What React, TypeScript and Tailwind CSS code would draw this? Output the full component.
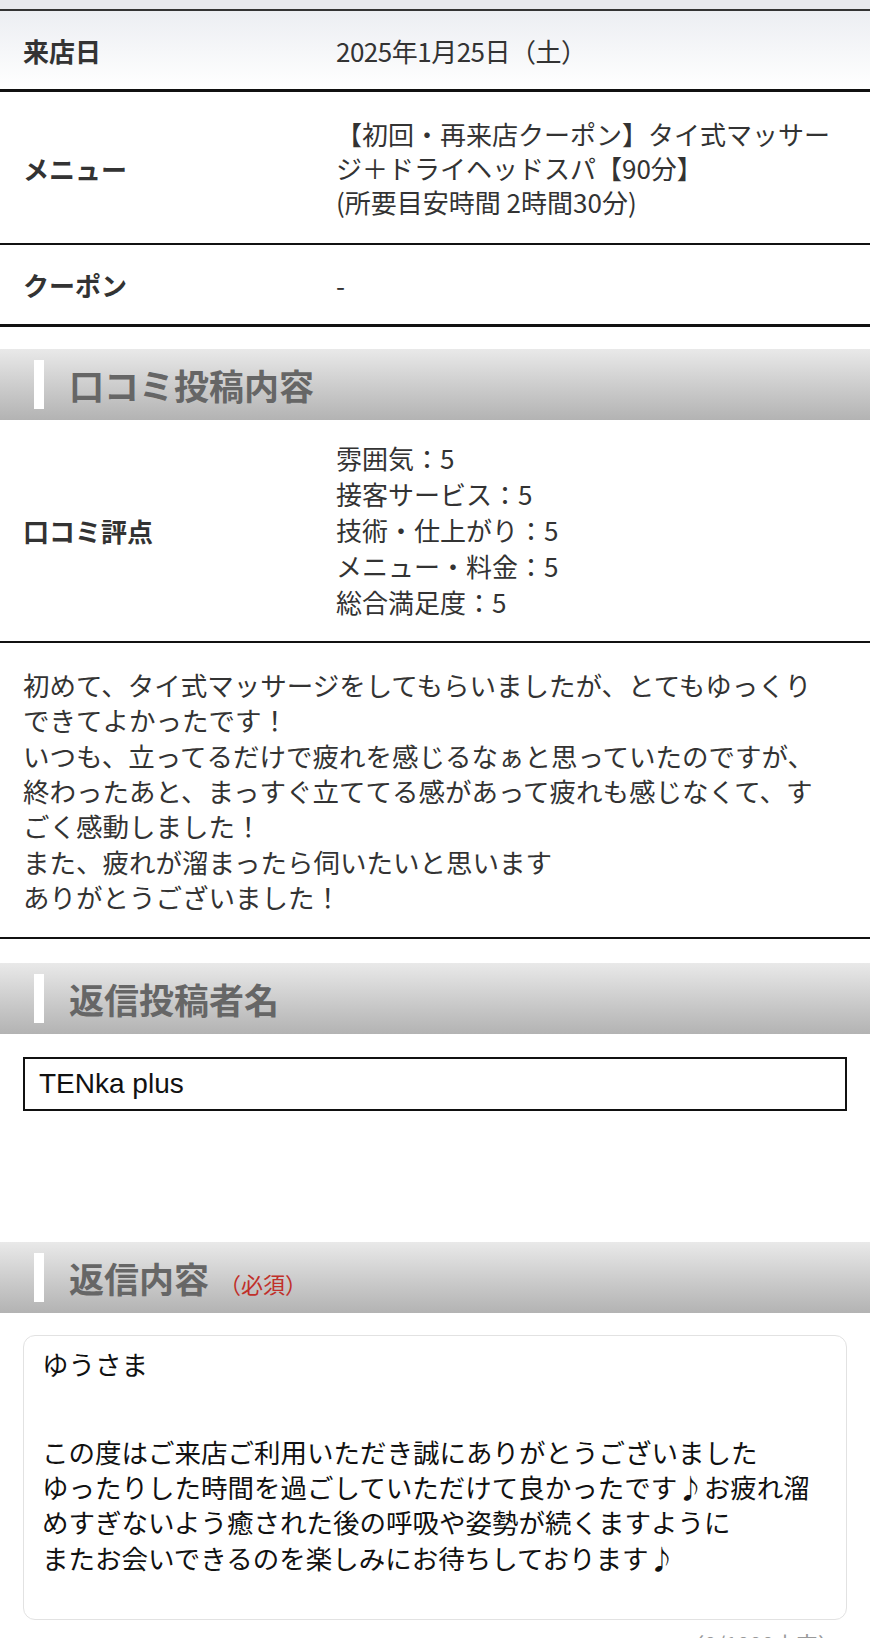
import React from 'react';

const jp = { fontFamily: '"Noto Sans CJK JP", "Noto Sans", sans-serif' };

const SectionHeader: React.FC<{ title: string; required?: boolean }> = ({ title, required }) => (
  <div className="h-[71px] flex items-center bg-gradient-to-b from-[#e9e9e9] to-[#b3b3b3]">
    <div className="ml-[34px] w-[10px] h-[49px] bg-white" />
    <div className="ml-[25px] flex items-baseline">
      <span className="text-[35px] font-bold text-[#666666] leading-none">{title}</span>
      {required && <span className="ml-[10px] text-[22px] text-[#c0302a] leading-none">（必須）</span>}
    </div>
  </div>
);

const Row: React.FC<{ label: string; className?: string; children: React.ReactNode }> = ({ label, className = '', children }) => (
  <div className={`grid grid-cols-[313px_1fr] items-center pl-[23px] border-[#111111] ${className}`}>
    <div className="text-[26px] font-bold text-[#333333]">{label}</div>
    <div className="text-[26px] text-[#333333]">{children}</div>
  </div>
);

const review = [
  '初めて、タイ式マッサージをしてもらいましたが、とてもゆっくり',
  'できてよかったです！',
  'いつも、立ってるだけで疲れを感じるなぁと思っていたのですが、',
  '終わったあと、まっすぐ立ててる感があって疲れも感じなくて、す',
  'ごく感動しました！',
  'また、疲れが溜まったら伺いたいと思います',
  'ありがとうございました！',
];

const reply = [
  'この度はご来店ご利用いただき誠にありがとうございました',
  'ゆったりした時間を過ごしていただけて良かったです♪お疲れ溜',
  'めすぎないよう癒された後の呼吸や姿勢が続くますように',
  'またお会いできるのを楽しみにお待ちしております♪',
];

export default function App() {
  return (
    <div className="w-[870px] h-[1638px] overflow-hidden bg-white" style={jp}>
      <div className="h-[9px] bg-[#e8e9ed]" />

      <Row label="来店日" className="h-[83px] border-t-2 border-b-[3px] border-t-[#333333] bg-gradient-to-b from-[#eceef2] to-white">
        <span className="tracking-[-0.5px]">2025年1月25日（土）</span>
      </Row>

      <Row label="メニュー" className="pt-[25px] pb-[24px] border-b-2">
        <div className="leading-[34px] whitespace-nowrap">
          <div>【初回・再来店クーポン】タイ式マッサー</div>
          <div>ジ＋ドライヘッドスパ【90分】</div>
          <div>(所要目安時間 2時間30分)</div>
        </div>
      </Row>

      <Row label="クーポン" className="h-[82px] border-b-[3px]">
        <span>-</span>
      </Row>

      <div className="mt-[22px]">
        <SectionHeader title="口コミ投稿内容" />
      </div>

      <Row label="口コミ評点" className="pt-[20px] pb-[21px] border-b-2">
        <div className="leading-[36px] whitespace-nowrap">
          <div>雰囲気：5</div>
          <div>接客サービス：5</div>
          <div>技術・仕上がり：5</div>
          <div>メニュー・料金：5</div>
          <div>総合満足度：5</div>
        </div>
      </Row>

      <div className="pl-[23px] pt-[24px] pb-[23px] border-b-2 border-[#111111] text-[26.5px] leading-[35.33px] text-[#333333] whitespace-nowrap">
        {review.map((l) => (
          <div key={l}>{l}</div>
        ))}
      </div>

      <div className="mt-[24px]">
        <SectionHeader title="返信投稿者名" />
      </div>

      <div className="mx-[23px] mt-[23px] h-[54px] border-2 border-[#111111] flex items-center pl-[14px]">
        <span className="text-[28px] text-[#111111]" style={{ fontFamily: '"Liberation Sans", Arial, sans-serif' }}>
          TENka plus
        </span>
      </div>

      <div className="mt-[131px]">
        <SectionHeader title="返信内容" required />
      </div>

      <div className="mx-[23px] mt-[22px] h-[285px] border border-[#e2e2e2] rounded-[12px] pl-[18px] pt-[10px] text-[26.5px] leading-[35.33px] text-[#111111] whitespace-nowrap">
        <div>ゆうさま</div>
        <div className="h-[52px]" />
        {reply.map((l) => (
          <div key={l}>{l}</div>
        ))}
      </div>

      <div className="mt-[12px] pr-[30px] text-right text-[22px] leading-none text-[#999999]">（0/1000文字）</div>
    </div>
  );
}
